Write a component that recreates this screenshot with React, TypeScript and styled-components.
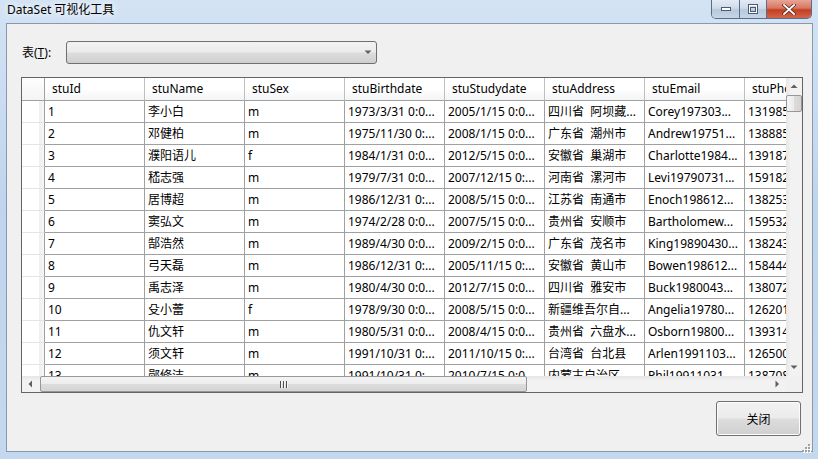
import React from "react";
import styled, { createGlobalStyle } from "styled-components";

const GlobalStyle = createGlobalStyle`
  html, body { margin: 0; padding: 0; width: 818px; height: 459px; overflow: hidden; }
  body { font-family: "Noto Sans", "Noto Sans CJK SC", sans-serif; font-size: 12px; color: #000; }
  #root { width: 818px; height: 459px; }
`;

const Window = styled.div`
  width: 818px;
  height: 459px;
  box-sizing: border-box;
  display: flex;
  flex-direction: column;
  background: linear-gradient(180deg, #d3e3f4 0%, #bfd5ed 45%, #c4d9ef 100%);
`;

const TitleBar = styled.div`
  height: 23px;
  flex: none;
  display: flex;
  align-items: flex-start;
  padding: 0 6px 0 7px;
`;

const TitleText = styled.div`
  flex: 1;
  margin-top: 2px;
  font-size: 12px;
  line-height: 16px;
  color: #000;
  text-shadow: 0 0 6px #fff, 0 0 10px #fff;
`;

const CaptionGroup = styled.div`
  display: flex;
  height: 18px;
  border: 1px solid #5a6d87;
  border-top: none;
  border-radius: 0 0 5px 5px;
  overflow: hidden;
`;

const CaptionButton = styled.div<{ $w: number; $close?: boolean }>`
  width: ${(p) => p.$w}px;
  height: 100%;
  display: flex;
  align-items: center;
  justify-content: center;
  box-sizing: border-box;
  border-left: ${(p) => (p.$close ? "1px solid #5a6d87" : "none")};
  & + & { border-left: 1px solid #5a6d87; }
  background: ${(p) =>
    p.$close
      ? "linear-gradient(180deg, #e8a596 0%, #d9765f 45%, #c33f23 55%, #d4654b 100%)"
      : "linear-gradient(180deg, #e3ebf5 0%, #cfdbe9 45%, #b8c8dc 55%, #c6d5e6 100%)"};
`;

const Client = styled.div`
  flex: 1;
  margin: 0 5px 7px 6px;
  background: #f0f0f0;
  border: 1px solid #8899ad;
  display: flex;
  flex-direction: column;
  padding: 17px 0 0 0;
  position: relative;
`;

const TableRow = styled.div`
  display: flex;
  align-items: center;
  height: 23px;
  padding-left: 15px;
`;

const Label = styled.div`
  width: 44px;
  font-size: 12px;
  line-height: 16px;
  span { text-decoration: underline; }
`;

const Combo = styled.div`
  width: 311px;
  height: 23px;
  box-sizing: border-box;
  border: 1px solid #707070;
  border-radius: 3px;
  background: linear-gradient(180deg, #f2f2f2 0%, #ebebeb 48%, #dddddd 52%, #cfcfcf 100%);
  display: flex;
  align-items: center;
  justify-content: flex-end;
  padding-right: 4px;
`;

const Grid = styled.div`
  width: 782px;
  height: 316px;
  margin: 13px 0 0 14px;
  box-sizing: border-box;
  border: 1px solid #646464;
  background: #fff;
  display: grid;
  grid-template-columns: 1fr 16px;
  grid-template-rows: 1fr 16px;
`;

const Body = styled.div`
  overflow: hidden;
  position: relative;
`;

const Row = styled.div<{ $header?: boolean }>`
  display: flex;
  height: ${(p) => (p.$header ? 23 : 22)}px;
  width: max-content;
`;

const RowHeader = styled.div<{ $header?: boolean }>`
  width: 23px;
  flex: none;
  box-sizing: border-box;
  border-right: 1px solid #a0a0a0;
  border-bottom: 1px solid ${(p) => (p.$header ? "#a0a0a0" : "#e4e4e4")};
  background: ${(p) =>
    p.$header
      ? "linear-gradient(180deg, #fdfdfd 0%, #f4f4f4 100%)"
      : "linear-gradient(90deg, #ffffff 0%, #ffffff 75%, #eeeeee 80%, #f7f7f7 100%)"};
`;

const Cell = styled.div<{ $header?: boolean }>`
  width: 100px;
  flex: none;
  box-sizing: border-box;
  border-right: 1px solid ${(p) => (p.$header ? "#bfbfbf" : "#a0a0a0")};
  border-bottom: 1px solid #a0a0a0;
  padding-left: ${(p) => (p.$header ? 7 : 3)}px;
  line-height: ${(p) => (p.$header ? 22 : 21)}px;
  white-space: pre;
  overflow: hidden;
  font-size: 12px;
  color: #000;
  background: ${(p) => (p.$header ? "linear-gradient(180deg, #ffffff 0%, #ffffff 50%, #f3f4f6 100%)" : "#fff")};
`;

const VScroll = styled.div`
  display: flex;
  flex-direction: column;
  background: linear-gradient(90deg, #e6e6e6 0%, #f2f2f2 30%, #f2f2f2 100%);
`;

const HScroll = styled.div`
  display: flex;
  align-items: stretch;
  background: linear-gradient(180deg, #e6e6e6 0%, #f2f2f2 30%, #f2f2f2 100%);
`;

const Corner = styled.div`
  background: #f0f0f0;
`;

const ArrowBox = styled.div<{ $v?: boolean }>`
  flex: none;
  width: ${(p) => (p.$v ? "16px" : "17px")};
  height: ${(p) => (p.$v ? "17px" : "16px")};
  display: flex;
  align-items: center;
  justify-content: center;
`;

const Track = styled.div`
  flex: 1;
  position: relative;
`;

const VThumb = styled.div`
  position: absolute;
  left: 0;
  right: 0;
  top: 0;
  height: 17px;
  box-sizing: border-box;
  border: 1px solid #979797;
  border-radius: 2px;
  background: linear-gradient(90deg, #f4f4f4 0%, #ececec 50%, #dcdcdc 51%, #d4d4d4 100%);
`;

const HThumb = styled.div`
  position: absolute;
  top: 0;
  bottom: 0;
  left: 1px;
  width: 487px;
  box-sizing: border-box;
  border: 1px solid #979797;
  border-radius: 2px;
  background: linear-gradient(180deg, #f4f4f4 0%, #ececec 50%, #dcdcdc 51%, #d4d4d4 100%);
  display: flex;
  align-items: center;
  justify-content: center;
`;

const Grip = styled.div`
  display: flex;
  gap: 1px;
  & > i {
    display: block;
    width: 1px;
    height: 7px;
    background: #4d4d4d;
    box-shadow: 1px 0 0 #f8f8f8;
    margin-right: 1px;
  }
`;

const Footer = styled.div`
  display: flex;
  justify-content: flex-end;
  padding: 8px 11px 0 0;
`;

const Button = styled.div`
  width: 85px;
  height: 35px;
  box-sizing: border-box;
  border: 1px solid #707070;
  border-radius: 3px;
  background: linear-gradient(180deg, #f2f2f2 0%, #ebebeb 48%, #dddddd 52%, #cfcfcf 100%);
  box-shadow: inset 0 0 0 1px #fcfcfc;
  display: flex;
  align-items: center;
  justify-content: center;
  font-size: 12px;
`;

const SizeGrip = styled.div`
  position: absolute;
  right: 1px;
  bottom: 1px;
  width: 10px;
  height: 10px;
`;

const Triangle = ({ dir }: { dir: "up" | "down" | "left" | "right" }) => {
  const pts = {
    up: "0.5,4 7.5,4 4,0.5",
    down: "0.5,0.5 7.5,0.5 4,4",
    left: "4,0.5 4,7.5 0.5,4",
    right: "0.5,0.5 0.5,7.5 4,4",
  }[dir];
  const w = dir === "up" || dir === "down" ? 8 : 5;
  const h = dir === "up" || dir === "down" ? 5 : 8;
  return (
    <svg width={w} height={h} viewBox={`0 0 ${w} ${h}`}>
      <polygon points={pts} fill="#606060" />
    </svg>
  );
};

const headers = ["stuId", "stuName", "stuSex", "stuBirthdate", "stuStudydate", "stuAddress", "stuEmail", "stuPhone"];

const rows: string[][] = [
  ["1", "李小白", "m", "1973/3/31 0:0...", "2005/1/15 0:0...", "四川省  阿坝藏...", "Corey197303...", "13198512345"],
  ["2", "邓健柏", "m", "1975/11/30 0:...", "2008/1/15 0:0...", "广东省  潮州市", "Andrew19751...", "13888512345"],
  ["3", "濮阳语儿", "f", "1984/1/31 0:0...", "2012/5/15 0:0...", "安徽省  巢湖市", "Charlotte1984...", "13918712345"],
  ["4", "嵇志强", "m", "1979/7/31 0:0...", "2007/12/15 0:...", "河南省  漯河市", "Levi19790731...", "15918212345"],
  ["5", "居博超", "m", "1986/12/31 0:...", "2008/5/15 0:0...", "江苏省  南通市", "Enoch198612...", "13825312345"],
  ["6", "窦弘文", "m", "1974/2/28 0:0...", "2007/5/15 0:0...", "贵州省  安顺市", "Bartholomew...", "15953212345"],
  ["7", "郜浩然", "m", "1989/4/30 0:0...", "2009/2/15 0:0...", "广东省  茂名市", "King19890430...", "13824312345"],
  ["8", "弓天磊", "m", "1986/12/31 0:...", "2005/11/15 0:...", "安徽省  黄山市", "Bowen198612...", "15844412345"],
  ["9", "禹志泽", "m", "1980/4/30 0:0...", "2012/7/15 0:0...", "四川省  雅安市", "Buck1980043...", "13807212345"],
  ["10", "殳小蕾", "f", "1978/9/30 0:0...", "2008/5/15 0:0...", "新疆维吾尔自...", "Angelia19780...", "12620112345"],
  ["11", "仇文轩", "m", "1980/5/31 0:0...", "2008/4/15 0:0...", "贵州省  六盘水...", "Osborn19800...", "13931412345"],
  ["12", "须文轩", "m", "1991/10/31 0:...", "2011/10/15 0:...", "台湾省  台北县", "Arlen1991103...", "12650012345"],
  ["13", "郧修洁", "m", "1991/10/31 0:...", "2010/7/15 0:0...", "内蒙古自治区", "Phil19911031...", "13870812345"],
];

export default function App() {
  return (
    <>
      <GlobalStyle />
      <Window>
        <TitleBar>
          <TitleText>DataSet 可视化工具</TitleText>
          <CaptionGroup>
            <CaptionButton $w={27}>
              <svg width="12" height="6" viewBox="0 0 12 6">
                <rect x="1.5" y="1.5" width="9" height="3" fill="#fff" stroke="#4a5a70" />
              </svg>
            </CaptionButton>
            <CaptionButton $w={27}>
              <svg width="12" height="10" viewBox="0 0 12 10">
                <rect x="1.5" y="0.5" width="9" height="9" fill="none" stroke="#4a5a70" />
                <rect x="2.5" y="1.5" width="7" height="7" fill="none" stroke="#fff" />
                <rect x="3.5" y="3.5" width="5" height="4" fill="none" stroke="#4a5a70" />
              </svg>
            </CaptionButton>
            <CaptionButton $w={45} $close>
              <svg width="14" height="11" viewBox="0 0 14 11">
                <path d="M2 1 L12 10 M12 1 L2 10" stroke="#5a2a20" strokeWidth="3.4" strokeLinecap="square" />
                <path d="M2 1 L12 10 M12 1 L2 10" stroke="#fff" strokeWidth="1.8" strokeLinecap="square" />
              </svg>
            </CaptionButton>
          </CaptionGroup>
        </TitleBar>
        <Client>
          <TableRow>
            <Label>
              表(<span>T</span>):
            </Label>
            <Combo>
              <Triangle dir="down" />
            </Combo>
          </TableRow>
          <Grid>
            <Body>
              <Row $header>
                <RowHeader $header />
                {headers.map((h) => (
                  <Cell key={h} $header>
                    {h}
                  </Cell>
                ))}
              </Row>
              {rows.map((r) => (
                <Row key={r[0]}>
                  <RowHeader />
                  {r.map((c, i) => (
                    <Cell key={i}>{c}</Cell>
                  ))}
                </Row>
              ))}
            </Body>
            <VScroll>
              <ArrowBox $v>
                <Triangle dir="up" />
              </ArrowBox>
              <Track>
                <VThumb />
              </Track>
              <ArrowBox $v>
                <Triangle dir="down" />
              </ArrowBox>
            </VScroll>
            <HScroll>
              <ArrowBox>
                <Triangle dir="left" />
              </ArrowBox>
              <Track>
                <HThumb>
                  <Grip>
                    <i />
                    <i />
                    <i />
                  </Grip>
                </HThumb>
              </Track>
              <ArrowBox>
                <Triangle dir="right" />
              </ArrowBox>
            </HScroll>
            <Corner />
          </Grid>
          <Footer>
            <Button>关闭</Button>
          </Footer>
          <SizeGrip>
            <svg width="10" height="10" viewBox="0 0 10 10">
              {[
                [7, 1],
                [4, 4],
                [7, 4],
                [1, 7],
                [4, 7],
                [7, 7],
              ].map(([x, y], i) => (
                <g key={i}>
                  <rect x={x + 1} y={y + 1} width="2" height="2" fill="#fff" />
                  <rect x={x} y={y} width="2" height="2" fill="#a0a0a0" />
                </g>
              ))}
            </svg>
          </SizeGrip>
        </Client>
      </Window>
    </>
  );
}
